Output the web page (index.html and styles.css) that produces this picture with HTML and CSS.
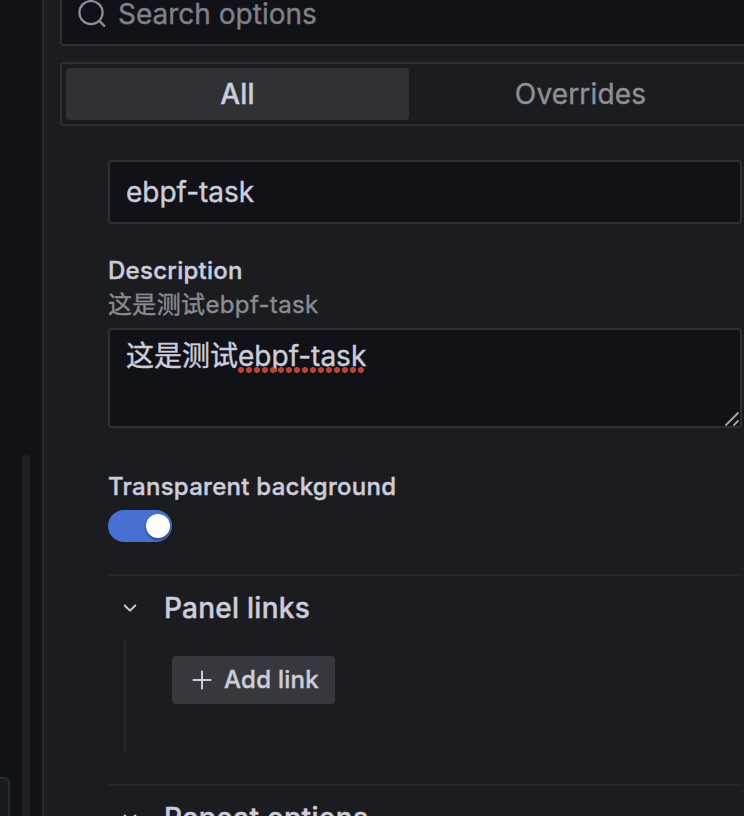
FILE: index.html
```html
<!DOCTYPE html>
<html lang="en">
<head>
<meta charset="utf-8">
<title>Panel options</title>
<link rel="stylesheet" href="styles.css">
</head>
<body>
<div class="app">
  <aside class="canvas">
    <div class="canvas-card"></div>
    <div class="scrollbar"></div>
  </aside>
  <main class="pane">
    <div class="search">
      <svg class="search-icon" viewBox="0 0 28 28" width="28" height="28"><circle cx="13" cy="12.6" r="11.6"/><path d="M21.3 20.9l5 5"/></svg>
      <span>Search options</span>
    </div>
    <div class="tabs">
      <div class="tab tab-active">All</div>
      <div class="tab">Overrides</div>
    </div>
    <div class="options">
      <div class="input">ebpf-task</div>
      <div class="field">
        <div class="label">Description</div>
        <div class="hint">这是测试ebpf-task</div>
        <div class="textarea">这是测试<span class="misspelled">ebpf-task</span>
          <svg class="grip" viewBox="0 0 14 14" width="14" height="14"><path d="M1 13L13 1M9 13l4-4"/></svg>
        </div>
      </div>
      <div class="field">
        <div class="label">Transparent background</div>
        <div class="switch"><div class="knob"></div></div>
      </div>
      <section class="group">
        <div class="group-head">
          <svg class="chevron" viewBox="0 0 14 8" width="14" height="8"><path d="M1.7 1.5L7 6.6l5.3-5.1"/></svg>
          <h2>Panel links</h2>
        </div>
        <div class="group-body">
          <div class="button">
            <svg class="plus" viewBox="0 0 20 20" width="20" height="20"><path d="M10 1.4v17.2M1.4 10h17.2"/></svg>
            <span>Add link</span>
          </div>
        </div>
      </section>
      <section class="group">
        <div class="group-head">
          <svg class="chevron" viewBox="0 0 14 8" width="14" height="8"><path d="M1.7 1.5L7 6.6l5.3-5.1"/></svg>
          <h2>Repeat options</h2>
        </div>
      </section>
    </div>
  </main>
</div>
</body>
</html>
```
FILE: styles.css
```css
* { box-sizing: border-box; }
body {
  margin: 0;
  background: #111217;
  color: #ccccdc;
  font: 400 28px/44px Inter, "Noto Sans CJK SC", sans-serif;
  letter-spacing: 0;
  -webkit-text-stroke: 0.4px currentColor;
}
svg { display: block; flex: none; fill: none; stroke: currentColor; stroke-linecap: round; stroke-linejoin: round; }
.app { display: flex; height: 816px; overflow: hidden; }
.canvas {
  flex: 0 0 42px;
  display: flex;
  align-items: flex-end;
  gap: 12px;
}
.canvas-card {
  width: 10px;
  height: 39px;
  background: #181b1f;
  border: 2px solid #2a2b2f;
  border-width: 2px 2px 0 0;
  border-radius: 0 6px 0 0;
}
.scrollbar { width: 8px; height: 361px; border-radius: 4px 4px 0 0; background: #1e2024; }
.pane {
  flex: 1;
  min-width: 0;
  background: #1b1c20;
  border-left: 2px solid #2a2b2f;
  padding-left: 16px;
}
.search {
  display: flex;
  align-items: center;
  gap: 12px;
  height: 46px;
  padding: 0 0 16px 16px;
  background: #111217;
  border: 2px solid #2e2f33;
  border-width: 0 0 2px 2px;
  border-radius: 0 0 0 4px;
  color: #7f8089;
}
.search-icon { stroke-width: 2.2; color: #8e8e99; }
.tabs {
  display: flex;
  height: 64px;
  margin-top: 16px;
  padding: 4px 0 4px 4px;
  border: 2px solid #2f3034;
  border-right: 0;
  border-radius: 4px 0 0 4px;
  letter-spacing: 0.15px;
}
.tab { flex: 0 0 343px; line-height: 52px; text-align: center; color: #8e8e99; }
.tab-active { background: #303135; border-radius: 4px; color: #ccccdc; font-weight: 500; }
.options { margin: 34px 2px 0 48px; }
.input {
  height: 64px;
  padding: 8px 16px;
  background: #111217;
  border: 2px solid #2e2f33;
  border-radius: 4px;
}
.field { margin-top: 32px; }
.label { font-size: 24px; line-height: 30px; font-weight: 500; letter-spacing: 0.27px; }
.hint { margin-top: 3px; font-size: 24px; line-height: 32px; letter-spacing: 0.36px; color: #8a8a94; }
.textarea {
  position: relative;
  height: 100px;
  margin-top: 7px;
  padding: 4px 16px;
  background: #111217;
  border: 2px solid #2e2f33;
  border-radius: 4px;
}
.misspelled { position: relative; display: inline-block; }
.misspelled::after {
  content: "";
  position: absolute;
  left: 0;
  top: 33px;
  width: 128px;
  height: 6px;
  background: radial-gradient(circle at 3px 3px, #bd4337 2.6px, transparent 3.3px) 0 0 / 8px 6px repeat-x;
}
.grip { position: absolute; right: 1px; bottom: 0; stroke-width: 1.8; color: #a5a5a5; }
.field + .field { margin-top: 44px; }
.switch {
  display: flex;
  justify-content: flex-end;
  align-items: center;
  width: 64px;
  height: 32px;
  margin-top: 8px;
  padding-right: 2px;
  border-radius: 16px;
  background: #4870d2;
}
.knob { width: 24px; height: 24px; border-radius: 50%; background: #fff; box-shadow: 0 2px 3px rgba(0, 0, 0, .4); }
.group { margin-top: 32px; border-top: 2px solid #242529; }
.group-head { display: flex; align-items: center; gap: 27px; height: 64px; padding-left: 15px; }
.group-head h2 { margin: 0; font-size: 28px; line-height: 44px; font-weight: 500; letter-spacing: 0.25px; }
.chevron { stroke-width: 2; }
.group-body { height: 112px; margin-left: 16px; padding: 16px 0 0 46px; border-left: 2px solid #26272b; }
.button {
  display: inline-flex;
  align-items: center;
  gap: 12px;
  width: 163px;
  height: 48px;
  padding-left: 20px;
  border-radius: 4px;
  background: #37383d;
  font-size: 24px;
  line-height: 48px;
  font-weight: 500;
  letter-spacing: 0.27px;
}
.plus { stroke-width: 2; }
```
